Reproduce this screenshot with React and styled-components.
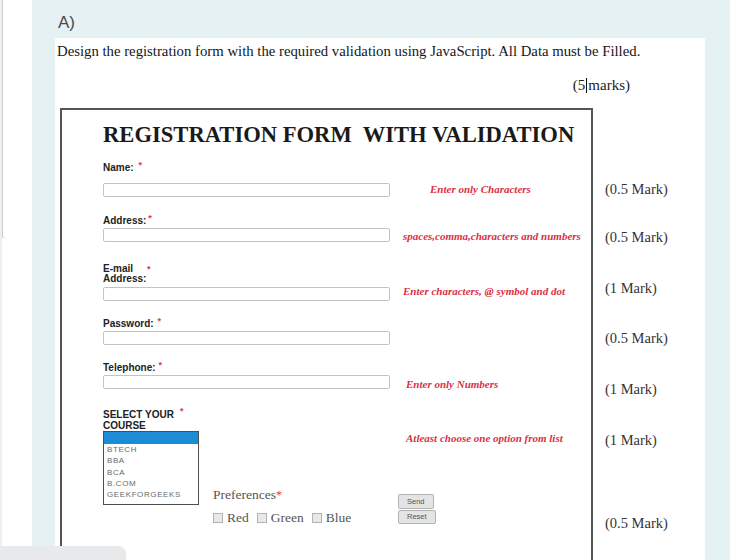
import React from 'react';
import styled, { createGlobalStyle } from 'styled-components';

const Global = createGlobalStyle`
  html, body { margin: 0; padding: 0; overflow: hidden; background: #fff; }
  #root { width: 730px; height: 560px; }
`;

const Page = styled.div`
  position: relative;
  display: flex;
  width: 730px;
  height: 560px;
  overflow: hidden;
`;

const LeftStrip = styled.div`
  width: 32px;
  flex-shrink: 0;
  box-sizing: border-box;
  background: #fff;
  border-left: 2px solid #efefef;
`;

const StripRule = styled.div`
  width: 2px;
  height: 237px;
  border-left: 1px solid #cdcdcd;
  border-bottom: 1px solid #e2e2e2;
`;

const Main = styled.div`
  flex: 1;
  min-width: 0;
  display: flex;
  flex-direction: column;
  background: #e6f1f4;
  padding: 0 25px 0 23px;
`;

const QuestionTag = styled.div`
  height: 38px;
  box-sizing: border-box;
  padding: 13px 0 0 3px;
  font-family: "Liberation Sans", Arial, sans-serif;
  font-size: 17px;
  line-height: 20px;
  color: #4a4a4a;
`;

const Sheet = styled.div`
  flex: 1;
  display: flex;
  flex-direction: column;
  background: #fff;
  padding: 5px 0 0 2px;
`;

const Prompt = styled.p`
  margin: 0;
  font-family: "Liberation Serif", "Times New Roman", serif;
  font-size: 14.75px;
  line-height: 16px;
  color: #161616;
  white-space: nowrap;
`;

const TotalMarks = styled.p`
  margin: 18px 0 0;
  padding-right: 75px;
  text-align: right;
  font-family: "Liberation Serif", "Times New Roman", serif;
  font-size: 15px;
  line-height: 16px;
  color: #222;
`;

const Caret = styled.span`
  display: inline-block;
  width: 1px;
  height: 15px;
  margin: 0 1px;
  background: #111;
  vertical-align: -3px;
`;

const Exhibit = styled.div`
  flex: 1;
  display: flex;
  align-items: flex-start;
  margin: 15px 0 0 3px;
`;

const FormShot = styled.div`
  align-self: stretch;
  width: 533px;
  flex-shrink: 0;
  box-sizing: border-box;
  border: 2px solid #555;
  border-bottom: none;
  padding: 12px 0 0 41px;
`;

const FormTitle = styled.h1`
  margin: 0;
  font-family: "Liberation Serif", "Times New Roman", serif;
  font-weight: bold;
  font-size: 22.6px;
  line-height: 26px;
  color: #1a1a1a;
  white-space: pre;
`;

const Field = styled.div`
  display: flex;
  align-items: flex-end;
  margin-top: ${(p) => p.$gap}px;
`;

const FieldMain = styled.div`
  width: 287px;
  flex-shrink: 0;
  display: flex;
  flex-direction: column;
`;

const Label = styled.div`
  font-family: "Liberation Sans", Arial, sans-serif;
  font-weight: bold;
  font-size: 10px;
  line-height: ${(p) => p.$lh || 10}px;
  color: #222;
  margin-bottom: ${(p) => p.$mb || 0}px;
  white-space: nowrap;
`;

const Req = styled.span`
  color: #e5334b;
  font-size: ${(p) => p.$size || 9}px;
  line-height: 0;
  vertical-align: ${(p) => p.$lift ?? 3}px;
  margin-left: ${(p) => p.$x || 0}px;
`;

const TextBox = styled.div`
  height: 14px;
  box-sizing: border-box;
  border: 1px solid #c3c3c3;
  border-radius: 2px;
  background: #fff;
`;

const Hint = styled.span`
  font-family: "Liberation Serif", "Times New Roman", serif;
  font-style: italic;
  font-weight: bold;
  font-size: 11px;
  line-height: 14px;
  color: #dc2f45;
  white-space: nowrap;
  margin-left: ${(p) => p.$x || 0}px;
  margin-bottom: ${(p) => p.$dy || 0}px;
`;

const CourseRow = styled.div`
  display: flex;
  align-items: flex-start;
  margin-top: 20px;
`;

const CourseCol = styled.div`
  width: 96px;
  flex-shrink: 0;
  display: flex;
  flex-direction: column;
`;

const ListBox = styled.div`
  height: 74px;
  box-sizing: border-box;
  border: 1px solid #4d4d4d;
  display: flex;
  flex-direction: column;
`;

const ListSelected = styled.div`
  height: 12px;
  background: #1b8dd6;
`;

const ListOption = styled.div`
  padding-left: 3px;
  font-family: "Liberation Sans", Arial, sans-serif;
  font-size: 8px;
  line-height: 11.3px;
  letter-spacing: 0.6px;
  color: #6a6a6a;
`;

const CourseSide = styled.div`
  flex: 1;
  display: flex;
  flex-direction: column;
`;

const SideHint = styled(Hint)`
  display: block;
  margin-top: 22px;
  padding-left: 207px;
`;

const PrefRow = styled.div`
  display: flex;
  align-items: flex-start;
  margin-top: 42px;
`;

const PrefGroup = styled.div`
  width: 185px;
  margin-left: 14px;
  display: flex;
  flex-direction: column;
  font-family: "Liberation Serif", "Times New Roman", serif;
  font-size: 13.5px;
  color: #555;
`;

const PrefTitle = styled.div`
  line-height: 16px;
`;

const Checks = styled.div`
  display: flex;
  align-items: center;
  height: 14px;
  margin-top: 8px;
  line-height: 14px;
`;

const Box = styled.span`
  width: 10px;
  height: 10px;
  box-sizing: border-box;
  border: 1px solid #b3b3b3;
  background: #e8e8e8;
  margin-right: 4px;
  flex-shrink: 0;
`;

const CheckText = styled.span`
  margin-right: 8px;
`;

const Buttons = styled.div`
  margin-top: 7px;
  display: flex;
  flex-direction: column;
  align-items: flex-start;
  gap: 1px;
`;

const MiniButton = styled.div`
  height: ${(p) => p.$h}px;
  box-sizing: border-box;
  padding: 0 8px;
  border: 1px solid #b4b4b4;
  border-radius: 2px;
  background: #e4e4e4;
  font-family: "Liberation Sans", Arial, sans-serif;
  font-size: 7.5px;
  line-height: ${(p) => p.$h - 2}px;
  color: #555;
`;

const MarkCol = styled.div`
  display: flex;
  flex-direction: column;
  margin-left: 12px;
`;

const Mark = styled.div`
  margin-top: ${(p) => p.$top}px;
  font-family: "Liberation Serif", "Times New Roman", serif;
  font-size: 14.5px;
  line-height: 18px;
  color: #333;
  white-space: nowrap;
`;

const BottomTab = styled.div`
  position: absolute;
  left: 0;
  bottom: 0;
  width: 126px;
  height: 14px;
  background: #e8e9ea;
  border-top-right-radius: 8px;
`;

const fields = [
  { key: 'name', gap: 15, mb: 10, label: <>Name:<Req $x={5}>*</Req></>, hint: 'Enter only Characters', hx: 40, hdy: 1 },
  { key: 'addr', gap: 19, mb: 2, label: <>Address:<Req $x={2}>*</Req></>, hint: 'spaces,comma,characters  and numbers', hx: 13, hdy: -1 },
  { key: 'mail', gap: 22, mb: 3, label: <>E-mail<Req $x={14} $lift={0}>*</Req><br />Address:</>, hint: 'Enter characters, @ symbol and dot', hx: 13, hdy: 3 },
  { key: 'pass', gap: 18, mb: 2, label: <>Password:<Req $x={4}>*</Req></> },
  { key: 'tel', gap: 18, mb: 2, label: <>Telephone:<Req $x={3}>*</Req></>, hint: 'Enter only Numbers', hx: 16, hdy: -2 },
];

const courses = ['BTECH', 'BBA', 'BCA', 'B.COM', 'GEEKFORGEEKS'];

const marks = [
  { t: '(0.5 Mark)', top: 72 },
  { t: '(0.5 Mark)', top: 30 },
  { t: '(1 Mark)', top: 33 },
  { t: '(0.5 Mark)', top: 32 },
  { t: '(1 Mark)', top: 33 },
  { t: '(1 Mark)', top: 33 },
  { t: '(0.5 Mark)', top: 65 },
];

export default function App() {
  return (
    <>
      <Global />
      <Page>
        <LeftStrip>
          <StripRule />
        </LeftStrip>
        <Main>
          <QuestionTag>A)</QuestionTag>
          <Sheet>
            <Prompt>
              Design the registration form with the required validation using JavaScript. All Data must be Filled.
            </Prompt>
            <TotalMarks>
              (5<Caret />marks)
            </TotalMarks>
            <Exhibit>
              <FormShot>
                <FormTitle>REGISTRATION FORM  WITH VALIDATION</FormTitle>
                {fields.map((f) => (
                  <Field key={f.key} $gap={f.gap}>
                    <FieldMain>
                      <Label $mb={f.mb} $lh={f.lh}>{f.label}</Label>
                      <TextBox />
                    </FieldMain>
                    {f.hint && (
                      <Hint $x={f.hx} $dy={f.hdy}>{f.hint}</Hint>
                    )}
                  </Field>
                ))}
                <CourseRow>
                  <CourseCol>
                    <Label $lh={11}>
                      SELECT YOUR<Req $x={6} $lift={4}>*</Req>
                      <br />
                      COURSE
                    </Label>
                    <ListBox>
                      <ListSelected />
                      {courses.map((c) => (
                        <ListOption key={c}>{c}</ListOption>
                      ))}
                    </ListBox>
                  </CourseCol>
                  <CourseSide>
                    <SideHint>Atleast choose one option from list</SideHint>
                    <PrefRow>
                      <PrefGroup>
                        <PrefTitle>
                          Preferences<Req $size={12} $lift={0}>*</Req>
                        </PrefTitle>
                        <Checks>
                          <Box />
                          <CheckText>Red</CheckText>
                          <Box />
                          <CheckText>Green</CheckText>
                          <Box />
                          <CheckText>Blue</CheckText>
                        </Checks>
                      </PrefGroup>
                      <Buttons>
                        <MiniButton $h={15}>Send</MiniButton>
                        <MiniButton $h={14}>Reset</MiniButton>
                      </Buttons>
                    </PrefRow>
                  </CourseSide>
                </CourseRow>
              </FormShot>
              <MarkCol>
                {marks.map((m, i) => (
                  <Mark key={i} $top={m.top}>{m.t}</Mark>
                ))}
              </MarkCol>
            </Exhibit>
          </Sheet>
        </Main>
        <BottomTab />
      </Page>
    </>
  );
}
